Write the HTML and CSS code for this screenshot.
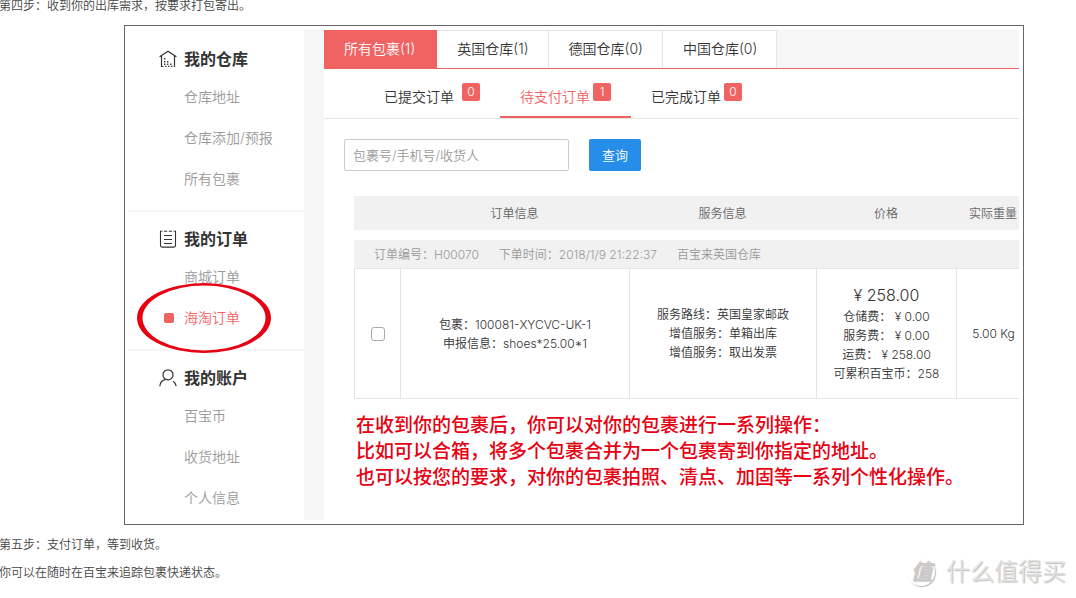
FILE: index.html
```html
<!DOCTYPE html>
<html lang="zh-CN">
<head>
<meta charset="utf-8">
<title>我的订单</title>
<link rel="stylesheet" href="styles.css">
</head>
<body>
<p class="step">第四步：收到你的出库需求，按要求打包寄出。</p>

<div class="frame">
  <nav class="sidebar">
    <section class="group">
      <h2 class="group-title">
        <svg class="icon" viewBox="0 0 18 18" fill="none" stroke="currentColor" stroke-width="1.2" aria-hidden="true">
          <path d="M.6 6.800 9 1.200l8.400 5.600M2.500 6v10.500h2M15.500 6v10.500h-.6"/>
          <path fill="currentColor" stroke="none" d="M5 8h1.400v1.400H5zM5 11h1.400v1.400H5zM8 11h1.400v1.400H8zM5 13.500h1.400v1.400H5zM8 13.500h1.400v1.400H8zM11 13.500h1.400v1.400H11zM6 15.700h1.400v1.400H6zM9 15.700h1.400v1.400H9zM12 15.700h1.400v1.400H12z"/>
        </svg>
        我的仓库
      </h2>
      <ul class="menu">
        <li class="item"><a href="#">仓库地址</a></li>
        <li class="item"><a href="#">仓库添加/预报</a></li>
        <li class="item"><a href="#">所有包裹</a></li>
      </ul>
    </section>
    <section class="group">
      <h2 class="group-title">
        <svg class="icon" viewBox="0 0 18 18" fill="none" stroke="currentColor" stroke-width="1.1" aria-hidden="true">
          <path d="M1.500 1.500v14q0 1.600 1.600 1.600h11.800q1.600 0 1.600-1.600v-14M1 1.200h2.400M5 1.200h3.200M9.800 1.200H13M14.600 1.200H17"/>
          <path d="M5 5.500h8M5 9.500h8M5 13.500h8"/>
        </svg>
        我的订单
      </h2>
      <ul class="menu">
        <li class="item"><a href="#">商城订单</a></li>
        <li class="item current">
          <a href="#" aria-current="page">海淘订单</a>
          <svg class="circle-mark" viewBox="0 0 134 70" aria-hidden="true">
            <path fill="#e60012" fill-rule="evenodd" d="M67 0a67 35 0 1 0 0 70a67 35 0 1 0 0-70zM67 2.500a61.500 32.500 0 1 1 0 65a61.500 32.500 0 1 1 0-65z"/>
          </svg>
        </li>
      </ul>
    </section>
    <section class="group">
      <h2 class="group-title">
        <svg class="icon" viewBox="0 0 18 18" fill="none" stroke="currentColor" stroke-width="1.2" aria-hidden="true">
          <circle cx="9" cy="5.800" r="5"/>
          <path d="M.8 17.200c.3-3.600 2.500-6 5.800-6.800M14.200 12.300c1.700 1.200 2.600 2.800 3 4.900"/>
        </svg>
        我的账户
      </h2>
      <ul class="menu">
        <li class="item"><a href="#">百宝币</a></li>
        <li class="item"><a href="#">收货地址</a></li>
        <li class="item"><a href="#">个人信息</a></li>
      </ul>
    </section>
  </nav>

  <main class="content">
    <div class="tabs">
      <button class="tab active" type="button">所有包裹(1)</button>
      <button class="tab" type="button">英国仓库(1)</button>
      <button class="tab" type="button">德国仓库(0)</button>
      <button class="tab" type="button">中国仓库(0)</button>
    </div>
    <div class="states">
      <button class="state wide" type="button">已提交订单<span class="badge">0</span></button>
      <button class="state active" type="button">待支付订单<span class="badge">1</span></button>
      <button class="state" type="button">已完成订单<span class="badge">0</span></button>
    </div>
    <form class="search">
      <input class="query" type="text" placeholder="包裹号/手机号/收货人" aria-label="包裹号/手机号/收货人">
      <button class="submit" type="button">查询</button>
    </form>
    <div class="orders">
      <table class="order-table">
        <colgroup>
          <col class="col-check"><col class="col-order"><col class="col-service"><col class="col-price"><col class="col-weight">
        </colgroup>
        <thead>
          <tr><th></th><th>订单信息</th><th>服务信息</th><th>价格</th><th>实际重量</th></tr>
        </thead>
        <tbody>
          <tr>
            <td class="meta" colspan="5">
              <div class="meta-row"><span>订单编号：H00070</span><span>下单时间：2018/1/9 21:22:37</span><span>百宝来英国仓库</span></div>
            </td>
          </tr>
          <tr class="order">
            <td><input class="check" type="checkbox" aria-label="选择订单 H00070"></td>
            <td>包裹：100081-XYCVC-UK-1<br>申报信息：shoes*25.00*1</td>
            <td>服务路线：英国皇家邮政<br>增值服务：单箱出库<br>增值服务：取出发票</td>
            <td><div class="total">¥ 258.00</div>仓储费： ¥ 0.00<br>服务费： ¥ 0.00<br>运费： ¥ 258.00<br>可累积百宝币：258</td>
            <td>5.00 Kg</td>
          </tr>
        </tbody>
      </table>
    </div>
    <p class="note">在收到你的包裹后，你可以对你的包裹进行一系列操作：<br>比如可以合箱，将多个包裹合并为一个包裹寄到你指定的地址。<br>也可以按您的要求，对你的包裹拍照、清点、加固等一系列个性化操作。</p>
  </main>
</div>

<footer class="footer">
  <div class="steps">
    <p>第五步：支付订单，等到收货。</p>
    <p>你可以在随时在百宝来追踪包裹快递状态。</p>
  </div>
  <div class="brand">
    <span class="brand-mark">值</span>
    <span class="brand-name">什么值得买</span>
  </div>
</footer>
</body>
</html>
```
FILE: styles.css
```css
* { box-sizing: border-box; }

body {
  margin: 0;
  overflow: hidden;
  background: #fff;
  color: #333;
  font: 350 12px/19px Inter, "Noto Sans CJK SC", sans-serif;
}

button, input {
  font-family: inherit;
  font-weight: inherit;
}

button {
  margin: 0;
  border: 0;
  background: none;
  color: inherit;
}

.step {
  margin: 0 0 13px -1px;
  line-height: 12px;
  color: #444;
}

.frame {
  display: flex;
  margin: 0 52px 0 124px;
  padding: 4px 4px 4px 3px;
  border: 1px solid #666;
}

/* Sidebar */
.sidebar {
  flex: none;
  width: 196px;
  padding: 2px 0 1px;
  border-right: 20px solid #f6f6f6;
}

.group {
  padding: 10px 0;
  border-bottom: 2px solid #f6f6f6;
}

.group:last-child {
  padding-bottom: 0;
  border-bottom: 0;
}

.group-title {
  display: flex;
  align-items: center;
  gap: 7px;
  height: 34px;
  margin: 0;
  padding-left: 31px;
  font-size: 16px;
  font-weight: 700;
}

.icon {
  width: 18px;
  height: 18px;
}

.menu {
  margin: 0;
  padding: 0 0 1px;
  list-style: none;
}

.item {
  position: relative;
  padding-left: 56px;
  font-size: 14px;
  line-height: 41px;
}

.item a {
  color: #999;
  text-decoration: none;
}

.current {
  display: flex;
  align-items: center;
  gap: 10px;
  padding-left: 36px;
}

.current::before {
  width: 10px;
  height: 10px;
  border-radius: 2px;
  background: #f06363;
  content: "";
}

.item.current a { color: #f06363; }

.circle-mark {
  position: absolute;
  top: -14px;
  left: 9px;
  width: 134px;
  height: 70px;
  pointer-events: none;
}

/* Content */
.content {
  flex: 1;
  min-width: 0;
  overflow: hidden;
}

.tabs {
  display: flex;
  height: 39px;
  border-bottom: 1px solid #f06363;
  background: #f6f6f6;
}

.tab {
  padding: 0 19px 3px 20px;
  border-top: 1px solid #e5e5e5;
  border-right: 1px solid #e5e5e5;
  background: #fff;
  font-size: 14px;
}

.tab.active {
  padding-right: 21px;
  border-color: #f06363;
  background: #f06363;
  color: #fff;
}

.states {
  display: flex;
  padding-left: 40px;
  border-bottom: 1px solid #e5e5e5;
}

.state {
  display: flex;
  align-items: flex-start;
  gap: 3px;
  height: 49px;
  padding: 14px 20px 0;
  border-bottom: 2px solid transparent;
  font-size: 14px;
  line-height: 28px;
}

.state.wide { gap: 8px; }

.state.active {
  border-bottom-color: #f06363;
  color: #f06363;
}

.badge {
  width: 18px;
  border-radius: 2px;
  background: #f06363;
  color: #fff;
  font-size: 12px;
  line-height: 18px;
}

.search {
  display: flex;
  gap: 20px;
  padding: 20px 20px 25px;
}

.query {
  width: 225px;
  height: 32px;
  padding: 0 8px;
  border: 1px solid #ccc;
  border-radius: 2px;
  font-size: 13px;
}

.query::placeholder { color: #999; }

.submit {
  width: 52px;
  padding: 0 0 2px;
  border-radius: 2px;
  background: #268de9;
  color: #fff;
  font-size: 13px;
}

/* The table runs past the right edge and is clipped there. */
.orders { margin-left: 30px; }

.order-table {
  width: calc(100% + 11px);
  table-layout: fixed;
  border-spacing: 0;
  text-align: center;
}

.col-check { width: 46px; }
.col-order { width: 229px; }
.col-service { width: 187px; }
.col-price { width: 140px; }
.col-weight { width: 74px; }

.order-table th {
  height: 34px;
  padding: 0;
  background: #f1f1f1;
  color: #666;
  font-weight: inherit;
}

.order-table tbody::before {
  display: table-row;
  height: 10px;
  content: "";
}

.order-table td { padding: 0; }

.order-table .meta {
  height: 28px;
  background: #f1f1f1;
  color: #999;
}

.meta-row {
  display: flex;
  gap: 20px;
  padding-left: 20px;
}

.order td {
  height: 131px;
  border: 1px solid #e5e5e5;
  border-right: 0;
}

.total {
  font-size: 16px;
  line-height: 23px;
}

.check {
  display: block;
  width: 14px;
  height: 14px;
  margin: 0 auto;
  border: 1px solid #aaa;
  border-radius: 3px;
  appearance: none;
}

.check:checked { background: #268de9; }

.note {
  margin: 14px 0 0 32px;
  color: #e60012;
  font-size: 19px;
  font-weight: 500;
  line-height: 26px;
  white-space: nowrap;
}

/* Footer */
.footer {
  display: flex;
  justify-content: space-between;
  padding: 6px 10px 0 0;
}

.steps {
  margin-left: -1px;
  color: #444;
  line-height: 28px;
}

.steps p { margin: 0; }

.brand {
  display: flex;
  align-items: center;
  gap: 11px;
  padding-top: 26px;
  color: #e2e2e2;
  line-height: 28px;
  text-shadow: 1px 1px 1px #bbb;
}

.brand-mark {
  width: 28px;
  height: 28px;
  border-radius: 50%;
  box-shadow: 1px 1px 1px #bbb;
  color: #ccc;
  font-size: 21px;
  font-style: italic;
  font-weight: 700;
  text-align: center;
}

.brand-name { font-size: 24px; }
```
